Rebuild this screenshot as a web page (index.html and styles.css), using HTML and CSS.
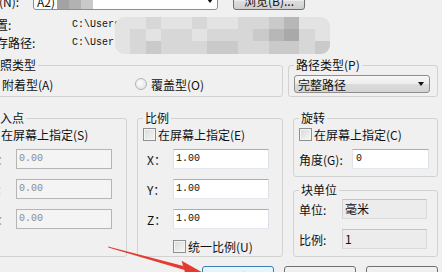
FILE: index.html
```html
<!DOCTYPE html>
<html lang="zh-CN">
<head>
    <meta charset="UTF-8">
    <meta name="viewport" content="width=device-width, initial-scale=1.0">
    <title>附着外部参照</title>
    <link rel="stylesheet" href="styles.css">
</head>
<body>
    <div class="dialog">
        <div class="name-row">
            <span class="name-label">名称(N):</span>
            <div class="combo name-combo">
                <span class="combo-text">A2)</span>
                <span class="chip c1"></span><span class="chip c2"></span><span class="chip c3"></span>
                <span class="arrow"></span>
            </div>
            <button class="btn browse">浏览(B)...</button>
        </div>

        <div class="paths">
            <div class="path-row"><span class="path-label">位置:</span><span class="path">C:\Users</span></div>
            <div class="path-row"><span class="path-label">保存路径:</span><span class="path">C:\User</span></div>
            <!-- pixelated cover over the user name -->
            <div class="mosaic">
                <i class="s1"></i><i class="s1"></i><i class="s2"></i><i class="s1"></i><i class="s1"></i><i class="s2"></i><i class="s1"></i>
                <i class="s1"></i><i class="s2"></i><i class="s2"></i><i class="s3"></i><i class="s4"></i><i class="s1"></i><i class="s1"></i>
                <i class="s1"></i><i class="s2"></i><i class="s1"></i><i class="s2"></i><i class="s2"></i><i class="s1"></i><i class="s2"></i>
                <i class="s2"></i><i class="s2"></i><i class="s3"></i><i class="s4"></i><i class="s5"></i><i class="s2"></i><i class="s1"></i>
                <i class="s1"></i><i class="s2"></i><i class="s3"></i><i class="s2"></i><i class="s2"></i><i class="s2"></i><i class="s3"></i>
                <i class="s3"></i><i class="s2"></i><i class="s2"></i><i class="s3"></i><i class="s3"></i><i class="s2"></i><i class="s3"></i>
            </div>
        </div>

        <div class="top-groups">
            <fieldset class="group">
                <legend>参照类型</legend>
                <div class="radios">
                    <label class="radio"><span class="dot checked"></span>附着型(A)</label>
                    <label class="radio"><span class="dot"></span>覆盖型(O)</label>
                </div>
            </fieldset>
            <fieldset class="group">
                <legend>路径类型(P)</legend>
                <div class="combo path-combo">
                    <span class="combo-text">完整路径</span>
                    <span class="arrow"></span>
                </div>
            </fieldset>
        </div>

        <div class="main-groups">
            <fieldset class="group box">
                <legend>插入点</legend>
                <div class="check-row"><span class="check"></span>在屏幕上指定(S)</div>
                <div class="xyz">
                    <span class="axis off">X：</span><span class="field off">0.00</span>
                    <span class="axis off">Y：</span><span class="field off">0.00</span>
                    <span class="axis off">Z：</span><span class="field off">0.00</span>
                </div>
            </fieldset>

            <fieldset class="group box">
                <legend>比例</legend>
                <div class="check-row"><span class="check"></span>在屏幕上指定(E)</div>
                <div class="xyz">
                    <span class="axis">X：</span><span class="field">1.00</span>
                    <span class="axis">Y：</span><span class="field">1.00</span>
                    <span class="axis">Z：</span><span class="field">1.00</span>
                </div>
                <div class="check-row uniform"><span class="check"></span>统一比例(U)</div>
            </fieldset>

            <div class="side">
                <fieldset class="group rotate">
                    <legend>旋转</legend>
                    <div class="check-row"><span class="check"></span>在屏幕上指定(C)</div>
                    <div class="angle">
                        <span>角度(G):</span><span class="field">0</span>
                    </div>
                </fieldset>
                <fieldset class="group units">
                    <legend>块单位</legend>
                    <div class="unit-grid">
                        <span>单位:</span><span class="field ro">毫米</span>
                        <span>比例:</span><span class="field ro">1</span>
                    </div>
                </fieldset>
            </div>
        </div>

        <div class="buttons">
            <button class="btn focus">确定</button>
            <button class="btn">取消</button>
            <button class="btn">帮助(H)</button>
        </div>
    </div>

    <svg class="pointer" width="442" height="272" viewBox="0 0 442 272">
        <polygon points="108,246.6 108.3,247.6 184.6,270 183.4,266" fill="#e53a30"/>
        <polygon points="181.6,260.8 207,275 186,276" fill="#e53a30"/>
    </svg>
</body>
</html>
```

FILE: styles.css
```css
* {
    box-sizing: border-box;
}
html, body {
    margin: 0;
}
body {
    position: relative;
    width: 442px;
    height: 272px;
    overflow: hidden;
    background-color: #f0f0f0;
    font-family: "Noto Sans CJK SC", sans-serif;
    font-size: 12px;
    color: #111;
}
.dialog {
    width: 470px;
    margin: -8px 0 0 -28px;
    padding: 0 4px 0 8px;
}

/* top rows */
.name-row {
    display: flex;
    align-items: center;
    height: 18px;
}
.name-label {
    width: 53px;
    text-indent: -5px;
    white-space: nowrap;
}
.combo {
    display: flex;
    align-items: center;
    height: 18px;
    padding: 0 4px 0 3px;
    border: 1px solid #8e8e8e;
    border-radius: 3px;
    background: linear-gradient(#f7f7f7, #ececec 50%, #dcdcdc 51%, #d4d4d4);
}
.name-combo {
    width: 185px;
    margin-right: 15px;
    background: #fff;
}
.combo-text {
    white-space: nowrap;
}
.chip {
    width: 12px;
    height: 16px;
}
.name-combo .combo-text {
    width: 20px;
}
.c1 { background: #a3a3a3; }
.c2 { background: #b2b2b2; }
.c3 { background: #c9c9c9; }
.arrow {
    margin-left: auto;
    border-top: 4px solid #111;
    border-left: 3.5px solid transparent;
    border-right: 3.5px solid transparent;
}
.btn {
    width: 72px;
    height: 23px;
    padding: 0;
    border: 1px solid #707070;
    border-radius: 3px;
    background: linear-gradient(#f2f2f2, #ebebeb 50%, #dddddd 51%, #cfcfcf);
    font-family: inherit;
    font-size: 12px;
    color: #111;
}
.browse {
    height: 18px;
    line-height: 14px;
}
.paths {
    position: relative;
    margin-top: 6px;
}
.path-row {
    display: grid;
    grid-template-columns: 92px 1fr;
    line-height: 18px;
}
.path-label {
    padding-left: 4px;
}
.path {
    font-family: "Liberation Mono", monospace;
    font-size: 10px;
}
.mosaic {
    position: absolute;
    left: 135px;
    top: 1px;
    width: 215px;
    height: 37px;
    display: grid;
    grid-template-columns: repeat(14, 1fr);
    grid-template-rows: 12px 12px 13px;
    border-radius: 9px;
    overflow: hidden;
    filter: blur(0.6px);
}
.s1 { background: #e3e3e3; }
.s2 { background: #d7d7d7; }
.s3 { background: #cacaca; }
.s4 { background: #b7b7b7; }
.s5 { background: #a9a9a9; }

/* group boxes */
.group {
    margin: 0;
    min-width: 0;
    padding: 3px 7px 3px 5px;
    border: 1px solid #d2d2d2;
    border-radius: 3px;
}
.group legend {
    padding: 0 2px;
    line-height: 14px;
}
.top-groups {
    display: grid;
    grid-template-columns: 303px 1fr;
    column-gap: 5px;
    margin-top: 6px;
}
.radios {
    display: grid;
    grid-template-columns: 149px 1fr;
    height: 18px;
}
.radio {
    display: flex;
    align-items: center;
}
.dot {
    width: 12px;
    height: 12px;
    margin-right: 4px;
    border: 1px solid #b3b3b3;
    border-radius: 50%;
    background: radial-gradient(circle at 40% 40%, #fdfdfd, #dedede);
}
.dot.checked {
    background: radial-gradient(circle, #2a6fb4 30%, #e8e8e8 36%);
}
.path-combo {
    width: 100%;
    padding-left: 3px;
    padding-right: 5px;
}

.main-groups {
    display: grid;
    grid-template-columns: 147px 146px 1fr;
    column-gap: 10px;
    margin-top: 14px;
}
.box {
    padding: 0 7px 1px 5px;
}
.check-row {
    display: flex;
    align-items: center;
    height: 18px;
    white-space: nowrap;
}
.check {
    flex: none;
    width: 13px;
    height: 13px;
    margin-right: 2px;
    border: 1px solid #8f8f8f;
    background: linear-gradient(135deg, #d9d9d9, #f7f7f7);
    box-shadow: inset 0 0 0 1px #f4f4f4;
}
.xyz {
    display: grid;
    grid-template-columns: 30px 96px;
    grid-auto-rows: 20px;
    row-gap: 10px;
    align-items: center;
    margin-top: 6px;
}
.axis {
    padding-left: 4px;
}
.off {
    color: #9a9a9a;
}
.field {
    height: 20px;
    padding: 0 2px;
    border: 1px solid;
    border-color: #abadb3 #dbdfe6 #e3e9ef #e2e3ea;
    background: #fff;
    font-family: "Liberation Mono", monospace;
    font-size: 10px;
    line-height: 18px;
    color: #111;
}
.field.off {
    border-color: #b5b5b5;
    background: #f4f4f4;
    color: #8c8c8c;
}
.field.ro {
    border-color: #c4c4c4 #dadada #dadada #d4d4d4;
    background: #ececec;
    font-family: "Noto Sans CJK SC", sans-serif;
    font-size: 12px;
}
.uniform {
    margin-top: 8px;
    padding-left: 30px;
}

.side {
    display: flex;
    flex-direction: column;
    gap: 6px;
}
.rotate {
    padding: 0 7px 7px 5px;
}
.angle {
    display: grid;
    grid-template-columns: 53px 77px;
    align-items: center;
    margin-top: 6px;
}
.angle .field {
    padding-left: 3px;
}
.units {
    flex: 1;
    padding: 2px 7px 6px 5px;
}
.unit-grid {
    display: grid;
    grid-template-columns: 43px 85px;
    grid-auto-rows: 20px;
    row-gap: 10px;
    align-items: center;
}

.buttons {
    display: flex;
    justify-content: flex-end;
    gap: 10px;
    margin-top: 9px;
}
.btn.focus {
    border-color: #3c7fb1;
    background: linear-gradient(#eaf6fd, #d9f0fc 50%, #bee6fd 51%, #a7d9f5);
}

.pointer {
    position: absolute;
    left: 0;
    top: 0;
    pointer-events: none;
}
```
